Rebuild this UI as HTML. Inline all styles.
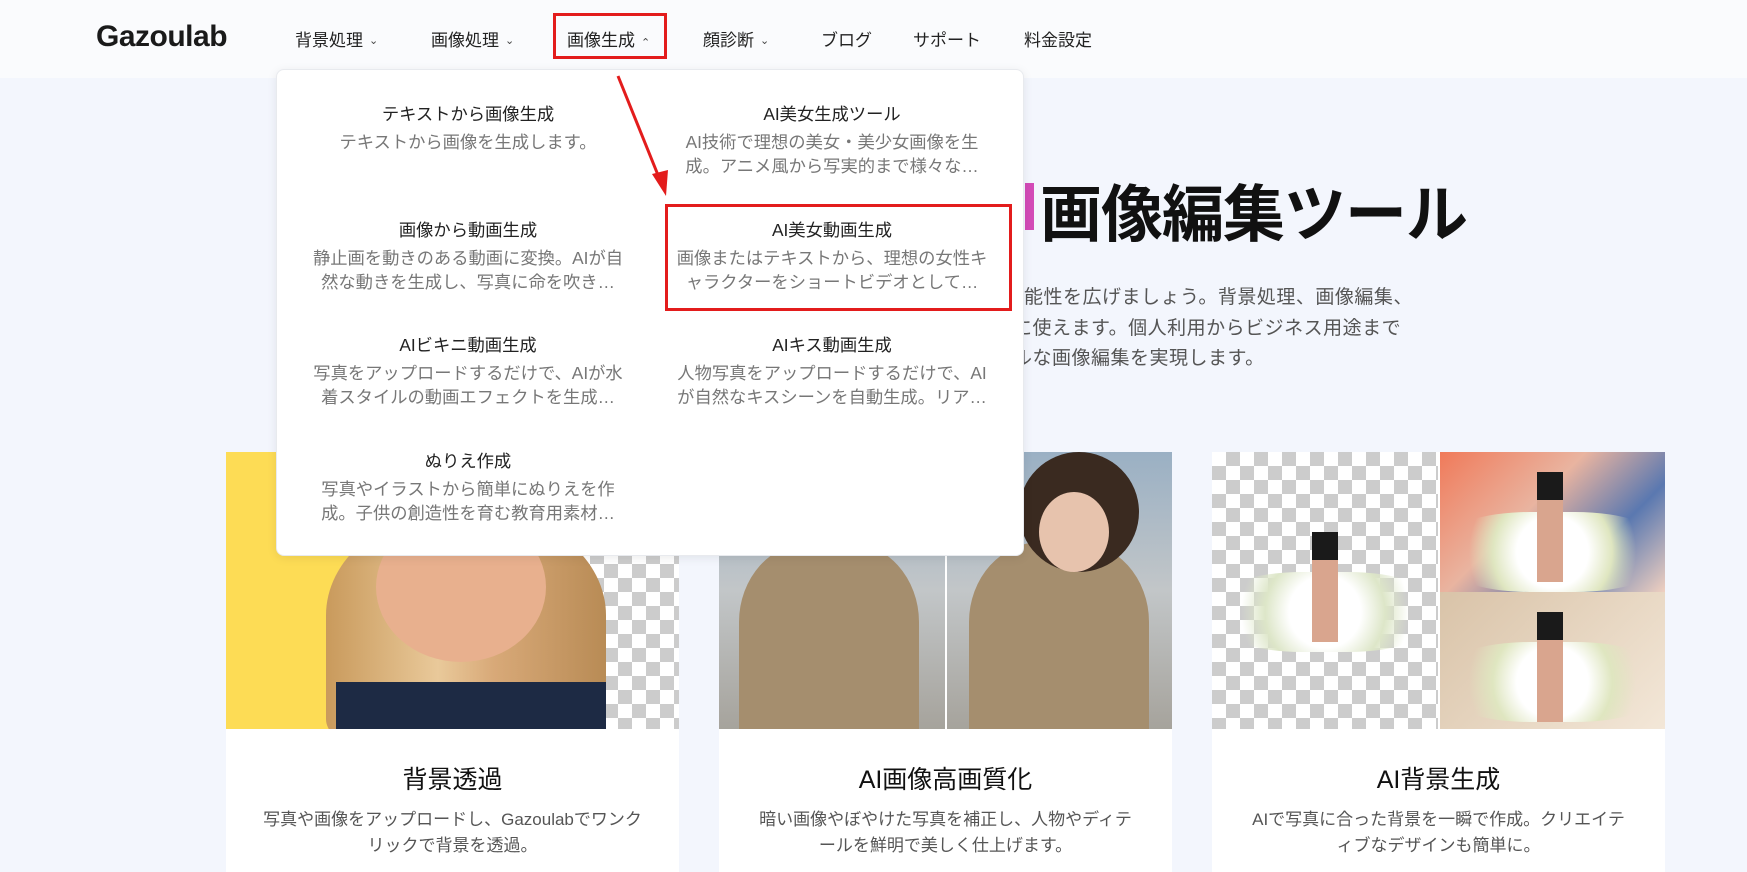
<!DOCTYPE html>
<html><head><meta charset="utf-8"><style>
*{margin:0;padding:0;box-sizing:border-box}
body{width:1747px;height:863px;overflow:hidden;background:#f3f6fd;font-family:"Liberation Sans","Noto Sans CJK JP",sans-serif;position:relative}
.abs{position:absolute}
.hdr{left:0;top:0;width:1747px;height:78px;background:#fafbfd}
.logo{left:96px;top:20px;font-size:30px;font-weight:bold;color:#1a1a1a;letter-spacing:-0.5px}
.nav{top:26px;font-size:17px;color:#222;white-space:nowrap}
.nav i{font-style:normal;font-size:11px;margin-left:6px;color:#444;position:relative;top:-2px}
.red{border:3px solid #e31c1c}
.dd{left:276px;top:69px;width:748px;height:487px;background:#fff;border-radius:8px;box-shadow:0 2px 10px rgba(0,0,0,.08);border:1px solid #e8eaee;z-index:5}
.it{width:322px;text-align:center;z-index:6}
.it b{display:block;font-weight:normal;font-size:17.3px;color:#222;line-height:24px}
.it span{display:block;font-size:17.3px;color:#777;line-height:24px;margin-top:4px}
.h1{left:1040px;top:164px;font-size:62px;font-weight:bold;color:#111;white-space:nowrap;letter-spacing:-1px}
.bar{left:1025px;top:183px;width:9px;height:47px;background:#d34bb7}
.p{font-size:19px;color:#555;white-space:nowrap;letter-spacing:0.5px}
.card{top:452px;width:453px;height:420px;background:#fff}
.img{left:0;top:0;width:453px;height:277px;overflow:hidden}
.ct{left:0;width:453px;text-align:center;top:308px;font-size:25px;color:#111}
.cd{left:34px;width:385px;text-align:center;top:355px;font-size:17px;color:#555;line-height:26px}
.chk{background-color:#fff;background-image:linear-gradient(45deg,#ccc 25%,transparent 25%,transparent 75%,#ccc 75%),linear-gradient(45deg,#ccc 25%,transparent 25%,transparent 75%,#ccc 75%);background-size:28px 28px;background-position:0 0,14px 14px}
</style></head><body>
<div class="abs hdr"></div>
<div class="abs logo">Gazoulab</div>
<div class="abs nav" style="left:295px">背景処理<i>&#8964;</i></div>
<div class="abs nav" style="left:431px">画像処理<i>&#8964;</i></div>
<div class="abs nav" style="left:567px">画像生成<i style="top:0">&#8963;</i></div>
<div class="abs nav" style="left:703px">顔診断<i>&#8964;</i></div>
<div class="abs nav" style="left:821px">ブログ</div>
<div class="abs nav" style="left:913px">サポート</div>
<div class="abs nav" style="left:1024px">料金設定</div>
<div class="abs red" style="left:553px;top:13px;width:114px;height:46px"></div>

<div class="abs bar"></div>
<div class="abs h1">画像編集ツール</div>
<div class="abs p" style="left:1024px;top:282px">能性を広げましょう。背景処理、画像編集、</div>
<div class="abs p" style="left:1013px;top:313px">に使えます。個人利用からビジネス用途まで</div>
<div class="abs p" style="left:1013px;top:343px">ルな画像編集を実現します。</div>

<div class="abs card" style="left:226px">
 <div class="abs img">
  <div class="abs chk" style="left:0;top:0;width:453px;height:277px"></div>
  <div class="abs" style="left:0;top:0;width:327px;height:277px;background:#fddc55"></div>
  <div class="abs" style="left:100px;top:60px;width:280px;height:230px;border-radius:45% 45% 10% 10%;background:linear-gradient(90deg,#c99a5c,#e9c99a 40%,#d8a978 60%,#b88b55)"></div>
  <div class="abs" style="left:150px;top:60px;width:170px;height:150px;border-radius:50%;background:#e8b08e"></div>
  <div class="abs" style="left:110px;top:230px;width:270px;height:50px;background:#1d2a44"></div>
 </div>
 <div class="abs ct">背景透過</div>
 <div class="abs cd">写真や画像をアップロードし、Gazoulabでワンクリックで背景を透過。</div>
</div>
<div class="abs card" style="left:719px">
 <div class="abs img" style="background:linear-gradient(180deg,#9ab0c4,#c2c6c8 50%,#a6a39c)">
  <div class="abs" style="left:226px;top:0;width:2px;height:277px;background:#fff"></div>
  <div class="abs" style="left:20px;top:90px;width:180px;height:200px;border-radius:40% 40% 0 0;background:#a58e6e"></div>
  <div class="abs" style="left:250px;top:90px;width:180px;height:200px;border-radius:40% 40% 0 0;background:#a58e6e"></div>
  <div class="abs" style="left:300px;top:0;width:120px;height:120px;border-radius:50%;background:#3a2a20"></div>
  <div class="abs" style="left:320px;top:40px;width:70px;height:80px;border-radius:50%;background:#e7c3ad"></div>
 </div>
 <div class="abs ct">AI画像高画質化</div>
 <div class="abs cd">暗い画像やぼやけた写真を補正し、人物やディテールを鮮明で美しく仕上げます。</div>
</div>
<div class="abs card" style="left:1212px">
 <div class="abs img">
  <div class="abs chk" style="left:0;top:0;width:226px;height:277px"></div>
  <div class="abs" style="left:228px;top:0;width:225px;height:140px;background:linear-gradient(135deg,#f07a5a,#e9b4a0 40%,#5a78b0 70%,#f0d0c0)"></div>
  <div class="abs" style="left:228px;top:140px;width:225px;height:137px;background:linear-gradient(135deg,#d9c3a8,#f3e7d8)"></div>
  <div class="abs" style="left:0;top:120px;width:226px;height:80px;border-radius:40%;background:radial-gradient(circle,#fff 30%,#dde6c8 50%,transparent 70%)"></div>
  <div class="abs" style="left:228px;top:60px;width:225px;height:80px;border-radius:40%;background:radial-gradient(circle,#fff 30%,#dfe6c0 50%,transparent 70%)"></div>
  <div class="abs" style="left:228px;top:190px;width:225px;height:80px;border-radius:40%;background:radial-gradient(circle,#fff 30%,#dfe6c0 50%,transparent 70%)"></div>
  <div class="abs" style="left:100px;top:80px;width:26px;height:110px;background:#d9a58e;border-top:28px solid #1a1a1a"></div>
  <div class="abs" style="left:325px;top:20px;width:26px;height:110px;background:#d9a58e;border-top:28px solid #1a1a1a"></div>
  <div class="abs" style="left:325px;top:160px;width:26px;height:110px;background:#d9a58e;border-top:28px solid #1a1a1a"></div>
 </div>
 <div class="abs ct">AI背景生成</div>
 <div class="abs cd">AIで写真に合った背景を一瞬で作成。クリエイティブなデザインも簡単に。</div>
</div>

<div class="abs dd"></div>
<div class="abs it" style="left:307px;top:102px"><b>テキストから画像生成</b><span>テキストから画像を生成します。</span></div>
<div class="abs it" style="left:671px;top:102px"><b>AI美女生成ツール</b><span>AI技術で理想の美女・美少女画像を生成。アニメ風から写実的まで様々な…</span></div>
<div class="abs it" style="left:307px;top:218px"><b>画像から動画生成</b><span>静止画を動きのある動画に変換。AIが自然な動きを生成し、写真に命を吹き…</span></div>
<div class="abs it" style="left:671px;top:218px"><b>AI美女動画生成</b><span>画像またはテキストから、理想の女性キャラクターをショートビデオとして…</span></div>
<div class="abs it" style="left:307px;top:333px"><b>AIビキニ動画生成</b><span>写真をアップロードするだけで、AIが水着スタイルの動画エフェクトを生成…</span></div>
<div class="abs it" style="left:671px;top:333px"><b>AIキス動画生成</b><span>人物写真をアップロードするだけで、AIが自然なキスシーンを自動生成。リア…</span></div>
<div class="abs it" style="left:307px;top:449px"><b>ぬりえ作成</b><span>写真やイラストから簡単にぬりえを作成。子供の創造性を育む教育用素材…</span></div>
<div class="abs red" style="left:665px;top:204px;width:347px;height:107px;z-index:7"></div>
<svg class="abs" style="left:600px;top:70px;z-index:8" width="80" height="135"><line x1="18" y1="6" x2="60" y2="110" stroke="#e31c1c" stroke-width="3"/><polygon points="52,104 68,100 66,126" fill="#e31c1c"/></svg>
</body></html>
